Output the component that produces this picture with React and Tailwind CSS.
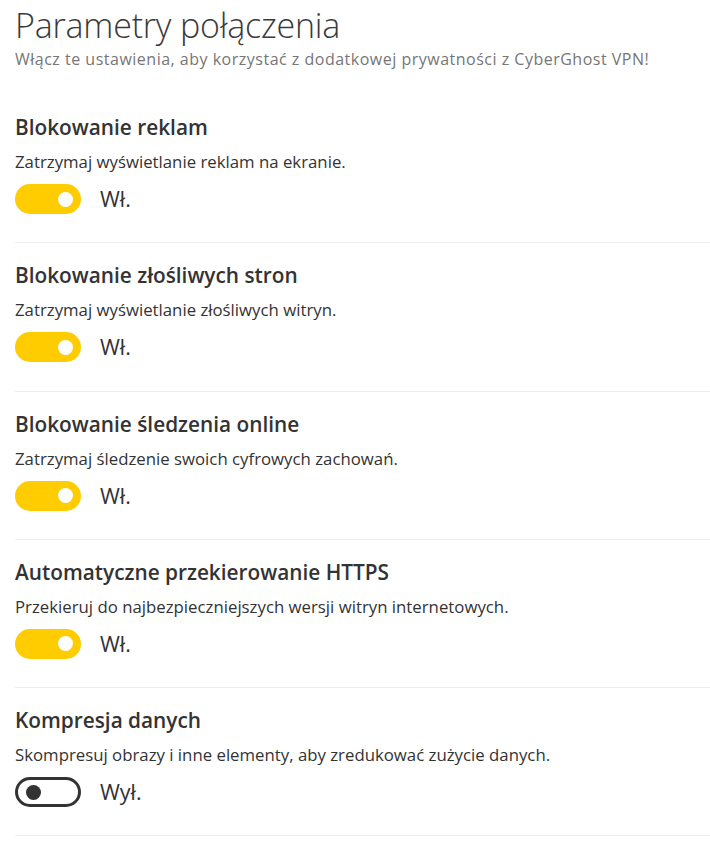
import React, { useState } from "react";

const settings = [
  {
    id: "ads",
    title: "Blokowanie reklam",
    desc: "Zatrzymaj wyświetlanie reklam na ekranie.",
    on: true,
  },
  {
    id: "malware",
    title: "Blokowanie złośliwych stron",
    desc: "Zatrzymaj wyświetlanie złośliwych witryn.",
    on: true,
  },
  {
    id: "tracking",
    title: "Blokowanie śledzenia online",
    desc: "Zatrzymaj śledzenie swoich cyfrowych zachowań.",
    on: true,
  },
  {
    id: "https",
    title: "Automatyczne przekierowanie HTTPS",
    desc: "Przekieruj do najbezpieczniejszych wersji witryn internetowych.",
    on: true,
  },
  {
    id: "compress",
    title: "Kompresja danych",
    desc: "Skompresuj obrazy i inne elementy, aby zredukować zużycie danych.",
    on: false,
  },
];

function Toggle({ on, onClick }) {
  return (
    <button
      onClick={onClick}
      className={`flex items-center w-[66px] h-[30px] rounded-full box-border ${
        on
          ? "bg-[#ffcc00] justify-end pr-[8px]"
          : "bg-white border-[3px] border-[#333333] justify-start pl-[8px]"
      }`}
    >
      <span
        className={`block w-[15px] h-[15px] rounded-full ${
          on ? "bg-white" : "bg-[#333333]"
        }`}
      />
    </button>
  );
}

export default function App() {
  const [values, setValues] = useState(
    settings.reduce((acc, s) => ({ ...acc, [s.id]: s.on }), {})
  );

  const flip = (id) => setValues((v) => ({ ...v, [id]: !v[id] }));

  return (
    <div
      className="w-[710px] h-[858px] bg-white overflow-hidden"
      style={{ fontFamily: '"Open Sans", "Noto Sans", sans-serif' }}
    >
      <div className="pl-[15px]">
        <div className="pt-[3px]">
          <h1 className="text-[34px] leading-[45px] font-light text-[#3a3a3a] tracking-[-0.2px]">
            Parametry połączenia
          </h1>
          <p className="text-[16px] leading-[22px] text-[#767676] tracking-[0.5px]">
            Włącz te ustawienia, aby korzystać z dodatkowej prywatności z CyberGhost VPN!
          </p>
        </div>

        <div className="mt-[25px]">
          {settings.map((s) => (
            <div key={s.id} className="border-b border-[#ededed] pt-[18px] pb-[28.3px]">
              <h2 className="text-[20.8px] leading-[28px] font-semibold text-[#333333]">
                {s.title}
              </h2>
              <p className="mt-[10px] text-[16.8px] leading-[22px] text-[#333333]">
                {s.desc}
              </p>
              <div className="mt-[11px] flex items-center">
                <Toggle on={values[s.id]} onClick={() => flip(s.id)} />
                <span className="ml-[19px] text-[21.5px] leading-[28px] text-[#333333]">
                  {values[s.id] ? "Wł." : "Wył."}
                </span>
              </div>
            </div>
          ))}
        </div>
      </div>
    </div>
  );
}
